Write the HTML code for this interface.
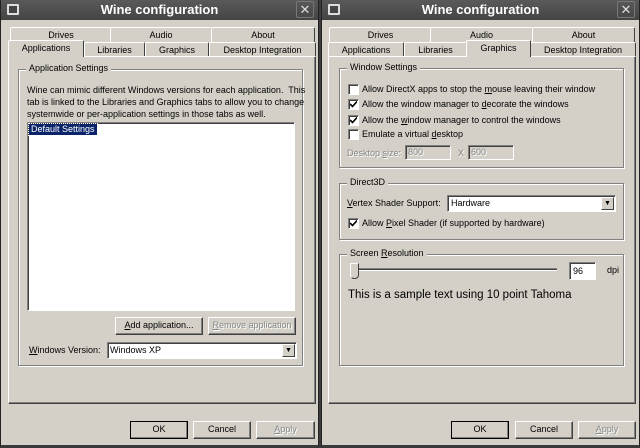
<!DOCTYPE html>
<html><head><meta charset="utf-8"><style>
*{box-sizing:border-box;margin:0;padding:0}
body{width:640px;height:448px;background:#3c3c3c;position:relative;overflow:hidden;font-family:"Liberation Sans","DejaVu Sans",sans-serif;font-size:9px;color:#000}
.win{position:absolute;top:0;width:319px;height:448px;background:#d4d0c8;border:1px solid #222;border-top:none;border-bottom:3px solid #3a3a3a}
.tb{position:absolute;left:0;top:0;right:0;height:20px;background:linear-gradient(#5a5a5a,#444);color:#fff;font-weight:bold;font-size:13px;text-align:center;line-height:20px}
.ic{position:absolute;left:6px;top:4px;width:12px;height:11px;border:2px solid #ddd;border-radius:1px;background:#444}
.x{position:absolute;right:4px;top:1px;width:18px;height:17px;border:1px solid #777;border-radius:2px;color:#ddd;font-weight:normal;font-size:13px;line-height:15px}
.a{position:absolute;white-space:nowrap}
.tab{position:absolute;height:15px;border:1px solid #fff;border-right:1px solid #404040;border-bottom:none;border-radius:2px 2px 0 0;text-align:center;line-height:14px;background:#d4d0c8}
.tab.s{height:17px;z-index:2;border-bottom:none}
.panel{position:absolute;left:7px;top:56px;width:308px;height:348px;border:1px solid #fff;border-right-color:#404040;border-bottom-color:#404040;box-shadow:inset -1px -1px 0 #808080}
.grp{position:absolute;border:1px solid #808080;box-shadow:1px 1px 0 #fff,inset 1px 1px 0 #fff}
.gl{position:absolute;top:-7px;left:7px;background:#d4d0c8;padding:0 3px}
.btn{position:absolute;height:18px;border:1px solid #fff;border-right-color:#404040;border-bottom-color:#404040;box-shadow:inset -1px -1px 0 #808080;text-align:center;line-height:15px;white-space:nowrap}
.btn.d{border:1px solid #000;}
.dis{color:#888;text-shadow:1px 1px 0 #fff}
.sunk{position:absolute;background:#fff;border:1px solid #808080;border-right-color:#fff;border-bottom-color:#fff;box-shadow:inset 1px 1px 0 #404040}
.dd{position:absolute;right:1px;top:1px;width:13px;bottom:1px;background:#d4d0c8;border:1px solid #fff;border-right-color:#404040;border-bottom-color:#404040;font-size:7px;text-align:center;line-height:12px}
.cb{position:absolute;width:11px;height:11px;background:#fff;border:1px solid #808080;border-right-color:#fff;border-bottom-color:#fff;box-shadow:inset 1px 1px 0 #404040}
.cb svg{position:absolute;left:1px;top:1px}
u{text-decoration:underline}
</style></head><body>

<div class="win" style="left:0">
 <div class="tb"><div class="ic"></div>Wine configuration<div class="x">✕</div></div>
 <div class="tab" style="left:9px;top:27px;width:102px">Drives</div>
 <div class="tab" style="left:109px;top:27px;width:102px">Audio</div>
 <div class="tab" style="left:210px;top:27px;width:104px">About</div>
 <div class="tab s" style="left:7px;top:40px;width:76px">Applications</div>
 <div class="tab" style="left:83px;top:42px;width:61px">Libraries</div>
 <div class="tab" style="left:144px;top:42px;width:64px">Graphics</div>
 <div class="tab" style="left:208px;top:42px;width:107px">Desktop Integration</div>
 <div class="panel"></div>
 <div class="grp" style="left:17px;top:69px;width:285px;height:297px"><span class="gl">Application Settings</span></div>
 <div class="a" style="left:26px;top:84px;line-height:12px">Wine can mimic different Windows versions for each application.&nbsp; This<br>tab is linked to the Libraries and Graphics tabs to allow you to change<br>systemwide or per-application settings in those tabs as well.</div>
 <div class="sunk" style="left:26px;top:122px;width:268px;height:189px"><span class="a" style="left:1px;top:1px;background:#0a246a;color:#fff;padding:0 2px;outline:1px dotted #fff;line-height:11px">Default Settings</span></div>
 <div class="btn" style="left:114px;top:317px;width:88px"><u>A</u>dd application...</div>
 <div class="btn dis" style="left:207px;top:317px;width:88px"><u>R</u>emove application</div>
 <div class="a" style="left:28px;top:345px"><u>W</u>indows Version:</div>
 <div class="sunk" style="left:106px;top:342px;width:190px;height:17px"><span class="a" style="left:2px;top:2px">Windows XP</span><div class="dd">▼</div></div>
 <div class="btn d" style="left:129px;top:421px;width:58px">OK</div>
 <div class="btn" style="left:192px;top:421px;width:58px">Cancel</div>
 <div class="btn dis" style="left:255px;top:421px;width:59px"><u>A</u>pply</div>
</div>

<div class="win" style="left:321px">
 <div class="tb"><div class="ic"></div>Wine configuration<div class="x">✕</div></div>
 <div class="tab" style="left:7px;top:27px;width:103px">Drives</div>
 <div class="tab" style="left:108px;top:27px;width:103px">Audio</div>
 <div class="tab" style="left:210px;top:27px;width:103px">About</div>
 <div class="tab" style="left:6px;top:42px;width:76px">Applications</div>
 <div class="tab" style="left:82px;top:42px;width:63px">Libraries</div>
 <div class="tab s" style="left:144px;top:40px;width:65px">Graphics</div>
 <div class="tab" style="left:208px;top:42px;width:106px">Desktop Integration</div>
 <div class="panel" style="left:6px"></div>
 <div class="grp" style="left:17px;top:68px;width:285px;height:100px"><span class="gl">Window Settings</span></div>
 <div class="cb" style="left:26px;top:84px"></div><div class="a" style="left:40px;top:84px">Allow DirectX apps to stop the <u>m</u>ouse leaving their window</div>
 <div class="cb" style="left:26px;top:99px"><svg width="7" height="7"><path d="M0 3L2.5 5.5L7 0.5" stroke="#000" stroke-width="1.6" fill="none"/></svg></div><div class="a" style="left:40px;top:99px">Allow the window manager to <u>d</u>ecorate the windows</div>
 <div class="cb" style="left:26px;top:115px"><svg width="7" height="7"><path d="M0 3L2.5 5.5L7 0.5" stroke="#000" stroke-width="1.6" fill="none"/></svg></div><div class="a" style="left:40px;top:115px">Allow the <u>w</u>indow manager to control the windows</div>
 <div class="cb" style="left:26px;top:129px"></div><div class="a" style="left:40px;top:129px">Emulate a virtual <u>d</u>esktop</div>
 <div class="a dis" style="left:25px;top:148px">Desktop <u>s</u>ize:</div>
 <div class="sunk dis" style="left:83px;top:145px;width:46px;height:15px;background:#d4d0c8"><span class="a" style="left:2px;top:1px">800</span></div>
 <div class="a dis" style="left:136px;top:148px">X</div>
 <div class="sunk dis" style="left:146px;top:145px;width:46px;height:15px;background:#d4d0c8"><span class="a" style="left:2px;top:1px">600</span></div>
 <div class="grp" style="left:17px;top:183px;width:285px;height:57px"><span class="gl">Direct3D</span></div>
 <div class="a" style="left:25px;top:198px"><u>V</u>ertex Shader Support:</div>
 <div class="sunk" style="left:125px;top:195px;width:169px;height:17px"><span class="a" style="left:3px;top:2px">Hardware</span><div class="dd">▼</div></div>
 <div class="cb" style="left:26px;top:218px"><svg width="7" height="7"><path d="M0 3L2.5 5.5L7 0.5" stroke="#000" stroke-width="1.6" fill="none"/></svg></div><div class="a" style="left:40px;top:218px">Allow <u>P</u>ixel Shader (if supported by hardware)</div>
 <div class="grp" style="left:17px;top:254px;width:285px;height:112px"><span class="gl">Screen <u>R</u>esolution</span></div>
 <div class="a" style="left:32px;top:268px;width:203px;height:3px;border-top:1px solid #808080;border-bottom:1px solid #fff;background:#404040"></div>
 <div class="a" style="left:28px;top:263px;width:9px;height:16px;background:#d4d0c8;border:1px solid #fff;border-right-color:#404040;border-bottom-color:#404040;border-radius:0 0 4px 4px"></div>
 <div class="sunk" style="left:247px;top:262px;width:27px;height:18px"><span class="a" style="left:3px;top:3px">96</span></div>
 <div class="a" style="left:285px;top:265px">dpi</div>
 <div class="a" style="left:26px;top:289px;font-size:11.5px">This is a sample text using 10 point Tahoma</div>
 <div class="btn d" style="left:129px;top:421px;width:58px">OK</div>
 <div class="btn" style="left:193px;top:421px;width:58px">Cancel</div>
 <div class="btn dis" style="left:256px;top:421px;width:58px"><u>A</u>pply</div>
</div>
</body></html>
